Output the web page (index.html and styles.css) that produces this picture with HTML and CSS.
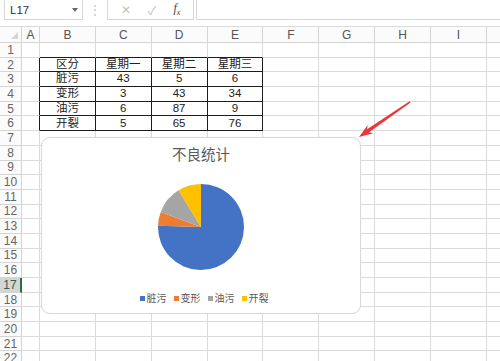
FILE: index.html
```html
<!DOCTYPE html>
<html lang="zh-CN">
<head>
    <meta charset="UTF-8">
    <meta name="viewport" content="width=device-width, initial-scale=1.0">
    <title>不良统计</title>
    <link rel="stylesheet" href="styles.css">
</head>
<body>
    <div class="formula-bar">
        <div class="name-box">
            <span>L17</span>
            <span class="drop"></span>
        </div>
        <div class="grip">⋮</div>
        <div class="buttons">
            <span class="btn">✕</span>
            <span class="btn">✓</span>
            <span class="fx"><i>f</i><sub>x</sub></span>
        </div>
        <div class="formula-input"></div>
    </div>

    <div class="sheet-wrap">
        <div class="sheet" id="sheet"></div>

        <div class="chart">
            <div class="chart-title">不良统计</div>
            <svg class="pie" width="88" height="88" viewBox="0 0 88 88">
                <path d="M44 44 L44 1 A43 43 0 1 1 1.02 42.82 Z" fill="#4472c4"/>
                <path d="M44 44 L1.02 42.82 A43 43 0 0 1 3.73 28.92 Z" fill="#ed7d31"/>
                <path d="M44 44 L3.73 28.92 A43 43 0 0 1 21.48 7.37 Z" fill="#a5a5a5"/>
                <path d="M44 44 L21.48 7.37 A43 43 0 0 1 44 1 Z" fill="#ffc000"/>
            </svg>
            <div class="legend">
                <span class="item"><span class="key blue"></span>脏污</span>
                <span class="item"><span class="key orange"></span>变形</span>
                <span class="item"><span class="key gray"></span>油污</span>
                <span class="item"><span class="key yellow"></span>开裂</span>
            </div>
        </div>

        <svg class="arrow" width="500" height="361" viewBox="0 0 500 361">
            <polygon points="359,137 373.3,133.2 369.1,132.3 410.6,102.6 409.6,101.2 367.1,129.3 367.7,125" fill="#e8383d"/>
        </svg>
    </div>

    <script>
        const sheet = document.getElementById('sheet');
        // J is only partly on screen, its letter falls outside the window
        const letters = ['A', 'B', 'C', 'D', 'E', 'F', 'G', 'H', 'I', ''];
        const data = {
            2: ['区分', '星期一', '星期二', '星期三'],
            3: ['脏污', '43', '5', '6'],
            4: ['变形', '3', '43', '34'],
            5: ['油污', '6', '87', '9'],
            6: ['开裂', '5', '65', '76']
        };

        function addCell(cls, text) {
            const cell = document.createElement('div');
            cell.className = cls;
            cell.textContent = text || '';
            sheet.appendChild(cell);
        }

        addCell('corner');
        letters.forEach(l => addCell('col-head', l));

        for (let r = 1; r <= 22; r++) {
            addCell(r === 17 ? 'row-head selected' : 'row-head', r);
            letters.forEach((l, c) => {
                let cls = 'cell';
                let text = '';
                if (data[r] && c >= 1 && c <= 4) {
                    cls += ' data';
                    text = data[r][c - 1];
                }
                if (data[r] && c === 0) cls += ' edge-right';
                if (r === 1 && c >= 1 && c <= 4) cls += ' edge-bottom';
                addCell(cls, text);
            });
        }
    </script>
</body>
</html>
```

FILE: styles.css
```css
* {
    box-sizing: border-box;
}
body {
    margin: 0;
    width: 500px;
    height: 361px;
    overflow: hidden;
    background: #fff;
    font-family: "Liberation Sans", "Noto Sans CJK SC", sans-serif;
}
.formula-bar {
    display: flex;
    align-items: stretch;
    height: 20px;
    padding-left: 4px;
    margin-bottom: 6px;
}
.name-box {
    display: flex;
    align-items: center;
    justify-content: space-between;
    width: 79px;
    padding: 0 4px 0 5px;
    border: 1px solid #d6d6d6;
    border-top: none;
    font-size: 11.5px;
    color: #333;
}
.drop {
    width: 0;
    height: 0;
    border-left: 3px solid transparent;
    border-right: 3px solid transparent;
    border-top: 4px solid #666;
}
.grip {
    width: 24px;
    display: flex;
    align-items: center;
    justify-content: center;
    color: #c6c6c6;
    font-size: 12px;
}
.buttons {
    display: flex;
    align-items: center;
    justify-content: space-around;
    width: 87px;
    padding: 0 4px;
    border: 1px solid #d6d6d6;
    border-top: none;
}
.btn {
    color: #c2c2c2;
    font-size: 12px;
}
.fx {
    font-family: "Liberation Serif", serif;
    font-size: 12px;
    color: #444;
}
.fx sub {
    font-size: 8px;
    font-style: italic;
}
.formula-input {
    flex: 1;
    margin-left: 2px;
    border: 1px solid #d6d6d6;
    border-top: none;
    border-right: none;
}
.sheet-wrap {
    position: relative;
    overflow: hidden;
    height: 335px;
}
.sheet {
    display: grid;
    grid-template-columns: 22px 18px repeat(9, 55.85px);
    grid-template-rows: 16px repeat(22, 14.7px);
    border-top: 1px solid #dadada;
}
.corner,
.col-head,
.row-head {
    display: flex;
    align-items: center;
    justify-content: center;
    background: #fbfbfb;
    border-right: 1px solid #d4d4d4;
    border-bottom: 1px solid #d4d4d4;
    color: #555;
    font-size: 12px;
}
.corner {
    justify-content: flex-end;
    align-items: flex-end;
    padding: 0 3px 3px 0;
}
.corner::after {
    content: "";
    width: 0;
    height: 0;
    border-left: 7px solid transparent;
    border-bottom: 7px solid #d6d6d6;
}
.row-head {
    color: #666;
}
.row-head.selected {
    background: #d3d6d3;
    border-right: 2px solid #217346;
    color: #3d5a46;
}
.cell {
    display: flex;
    align-items: center;
    justify-content: center;
    border-right: 1px solid #dadada;
    border-bottom: 1px solid #dadada;
    font-size: 11.5px;
    color: #222;
    line-height: 1;
}
.cell.data {
    border-right-color: #1c1c1c;
    border-bottom-color: #1c1c1c;
}
.cell.edge-right {
    border-right-color: #1c1c1c;
}
.cell.edge-bottom {
    border-bottom-color: #1c1c1c;
}
.chart {
    position: absolute;
    left: 41px;
    top: 111px;
    width: 320px;
    height: 177px;
    background: #fff;
    border: 1px solid #d9d9d9;
    border-radius: 9px;
    box-shadow: 0 0 1px rgba(0, 0, 0, 0.08);
    display: flex;
    flex-direction: column;
    align-items: center;
    padding-top: 6px;
}
.chart-title {
    font-family: "Noto Sans CJK SC", sans-serif;
    font-size: 14.5px;
    line-height: 20px;
    color: #595959;
}
.pie {
    margin-top: 19px;
    display: block;
}
.legend {
    display: flex;
    gap: 7px;
    margin-top: 21px;
    margin-left: 6px;
    font-family: "Noto Sans CJK SC", sans-serif;
    font-size: 10px;
    line-height: 12px;
    color: #595959;
}
.item {
    display: flex;
    align-items: center;
    gap: 2px;
}
.key {
    width: 5px;
    height: 5px;
}
.blue { background: #4472c4; }
.orange { background: #ed7d31; }
.gray { background: #a5a5a5; }
.yellow { background: #ffc000; }
.arrow {
    position: absolute;
    left: 0;
    top: -26px;
    pointer-events: none;
}
```
